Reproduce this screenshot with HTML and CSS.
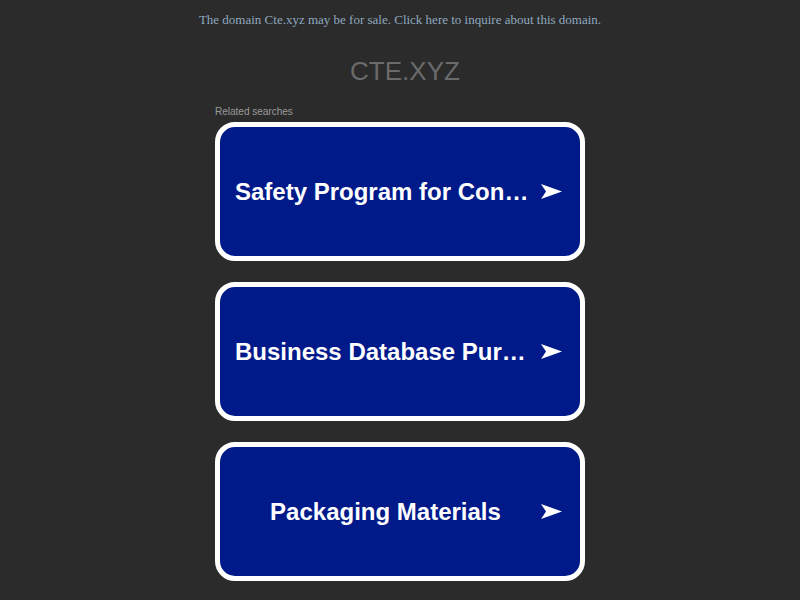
FILE: index.html
```html
<!DOCTYPE html>
<html>
<head>
<meta charset="utf-8">
<link rel="stylesheet" href="styles.css">
</head>
<body>
<p class="sale"><a href="#">The domain Cte.xyz may be for sale. Click here to inquire about this domain.</a></p>
<h1 class="title">CTE.XYZ</h1>
<div class="wrap">
  <div class="related">Related searches</div>
  <ul class="list">
    <li><a class="card" href="#"><span class="label">Safety Program for Construction Companies</span><svg class="arrow" viewBox="0 0 21 15" width="21" height="15"><path d="M0 0 L21 7.5 L0 15 L5 7.5 Z" fill="#fff"/></svg></a></li>
    <li><a class="card" href="#"><span class="label">Business Database Purchase</span><svg class="arrow" viewBox="0 0 21 15" width="21" height="15"><path d="M0 0 L21 7.5 L0 15 L5 7.5 Z" fill="#fff"/></svg></a></li>
    <li><a class="card" href="#"><span class="label">Packaging Materials</span><svg class="arrow" viewBox="0 0 21 15" width="21" height="15"><path d="M0 0 L21 7.5 L0 15 L5 7.5 Z" fill="#fff"/></svg></a></li>
  </ul>
</div>
</body>
</html>
```
FILE: styles.css
```css
html, body {
  margin: 0;
  padding: 0;
  background: #2b2b2b;
}
.sale {
  margin: 12px 0 0;
  text-align: center;
  font-family: "Liberation Serif", serif;
  font-size: 13px;
  line-height: 15px;
}
.sale a {
  color: #8fa8bf;
  text-decoration: none;
}
.title {
  margin: 29px 0 0;
  padding-left: 10px;
  text-align: center;
  font-family: "Liberation Sans", Arial, sans-serif;
  font-weight: normal;
  font-size: 26px;
  line-height: 30px;
  color: #6a6a6a;
}
.wrap {
  width: 370px;
  margin: 20px auto 0;
}
.related {
  font-family: "Liberation Sans", Arial, sans-serif;
  font-size: 10px;
  line-height: 12px;
  color: #9a9a9a;
}
.list {
  list-style: none;
  margin: 4px 0 0;
  padding: 0;
  display: flex;
  flex-direction: column;
  gap: 21px;
}
.card {
  box-sizing: border-box;
  height: 139px;
  display: flex;
  align-items: center;
  border: 5px solid #fff;
  border-radius: 20px;
  background: #011a8a;
  padding: 0 18px 0 15px;
  text-decoration: none;
  color: #fff;
  font-family: "Liberation Sans", Arial, sans-serif;
  font-weight: bold;
  font-size: 24px;
}
.label {
  flex: 1;
  min-width: 0;
  white-space: nowrap;
  overflow: hidden;
  text-overflow: ellipsis;
  text-align: center;
}
.arrow {
  flex: none;
  margin-left: 5px;
}
```
